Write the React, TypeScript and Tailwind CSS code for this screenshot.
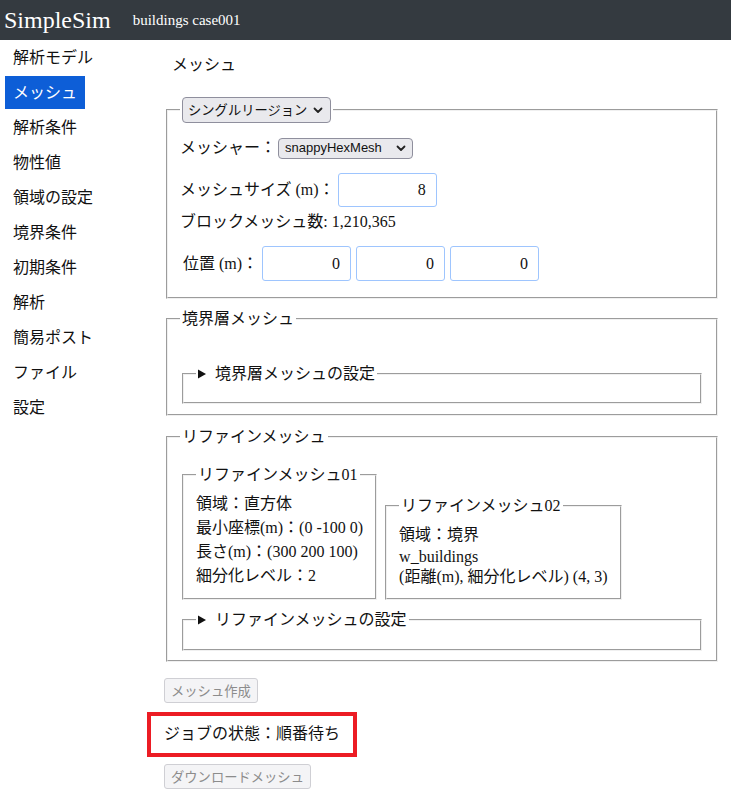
import React from 'react';

const menuItems = [
  '解析モデル',
  'メッシュ',
  '解析条件',
  '物性値',
  '領域の設定',
  '境界条件',
  '初期条件',
  '解析',
  '簡易ポスト',
  'ファイル',
  '設定',
];

function Chevron() {
  return (
    <svg width="10" height="7" viewBox="0 0 10 7" className="shrink-0">
      <polyline points="1.5,1.5 5,5 8.5,1.5" fill="none" stroke="#222" strokeWidth="1.8" strokeLinecap="round" strokeLinejoin="round" />
    </svg>
  );
}

function Triangle() {
  return (
    <svg width="9" height="10" viewBox="0 0 9 10" className="mr-[8px] inline-block">
      <polygon points="0,0.5 8,5 0,9.5" fill="#111" />
    </svg>
  );
}

function Sidebar() {
  return (
    <nav className="w-[164px] shrink-0 pt-px pl-[5px]">
      {menuItems.map((item) => {
        const active = item === 'メッシュ';
        return (
          <div key={item} className="h-[35px]">
            <span
              className={`inline-flex h-[33px] items-center px-2 text-[16px] ${
                active ? 'bg-[#0d5ed7] text-white' : 'text-[#111]'
              }`}
            >
              {item}
            </span>
          </div>
        );
      })}
    </nav>
  );
}

const fieldset = 'mx-[2px] border-2 border-[#f0f0f0] [border-style:groove] px-3';

function NumberBox({ value, width }: { value: string; width: string }) {
  return (
    <input
      readOnly
      value={value}
      className={`${width} h-full rounded-[3px] border border-[#9ec5fe] bg-white pr-[10px] text-right text-[16px] text-[#111] outline-none`}
    />
  );
}

export default function App() {
  return (
    <div className="min-h-screen bg-white font-['Liberation_Serif','Noto_Sans_CJK_JP',serif] text-[#111]">
      <header className="flex h-10 items-center bg-[#343a40] text-white">
        <span className="pl-[4px] text-[24px] leading-none">SimpleSim</span>
        <span className="ml-[22px] mt-[1px] text-[15px] leading-none">buildings case001</span>
      </header>

      <div className="flex">
        <Sidebar />

        <main className="w-[556px] pt-[13px]">
          <h2 className="pl-[8px] text-[16px] font-normal leading-6">メッシュ</h2>

          {/* single region */}
          <fieldset className={`${fieldset} mt-[20px] pb-[16px]`}>
            <legend className="px-[2px]">
              <span className="flex h-[26px] w-[149px] items-center justify-between rounded-[4px] border border-[#8f8f9d] bg-[#e9e9ed] pl-[5px] pr-[7px] font-['Noto_Sans_CJK_JP',sans-serif] text-[13.3px]">
                シングルリージョン
                <Chevron />
              </span>
            </legend>

            <div className="mt-[13px] flex h-6 items-center text-[16px]">
              <span>メッシャー：</span>
              <span className="ml-[2px] flex h-[21px] w-[135px] items-center justify-between rounded-[4px] border border-[#8f8f9d] bg-[#e9e9ed] pl-[6px] pr-[6px] font-['Liberation_Sans','Noto_Sans_CJK_JP',sans-serif] text-[13px]">
                snappyHexMesh
                <Chevron />
              </span>
            </div>

            <div className="mt-[13px] flex h-[34px] items-center text-[16px]">
              <span>メッシュサイズ (m)：</span>
              <span className="ml-[3px] h-[34px]">
                <NumberBox value="8" width="w-[99px]" />
              </span>
            </div>

            <div className="mt-[3px] text-[16px] leading-6">ブロックメッシュ数: 1,210,365</div>

            <div className="mt-[12px] flex h-[35px] items-center text-[16px]">
              <span className="pl-[3px]">位置 (m)：</span>
              <div className="ml-[4px] flex h-[35px] gap-[5px]">
                <NumberBox value="0" width="w-[89px]" />
                <NumberBox value="0" width="w-[89px]" />
                <NumberBox value="0" width="w-[89px]" />
              </div>
            </div>
          </fieldset>

          {/* boundary layer */}
          <fieldset className={`${fieldset} mt-[9px] pb-[10px]`}>
            <legend className="px-[2px] text-[16px] leading-[22px]">境界層メッシュ</legend>
            <fieldset className={`${fieldset} mt-[33px] pb-[17px]`}>
              <legend className="flex items-center px-[2px] text-[16px] leading-[22px]">
                <Triangle />
                境界層メッシュの設定
              </legend>
            </fieldset>
          </fieldset>

          {/* refine */}
          <fieldset className={`${fieldset} mt-[10px] pb-[9px]`}>
            <legend className="px-[2px] text-[16px] leading-[22px]">リファインメッシュ</legend>

            <div className="mt-[16px] flex items-end gap-[4px]">
              <fieldset className={`${fieldset} pb-[10px]`}>
                <legend className="px-[2px] text-[16px] leading-[22px]">リファインメッシュ01</legend>
                <div className="mt-[6px] text-[16px] leading-6">
                  <div>領域：直方体</div>
                  <div>最小座標(m)：(0 -100 0)</div>
                  <div>長さ(m)：(300 200 100)</div>
                  <div>細分化レベル：2</div>
                </div>
              </fieldset>

              <fieldset className={`${fieldset} pb-[11px]`}>
                <legend className="px-[2px] text-[16px] leading-[22px]">リファインメッシュ02</legend>
                <div className="mt-[6px] text-[16px]">
                  <div className="leading-6">領域：境界</div>
                  <div className="leading-[20px]">w_buildings</div>
                  <div className="leading-[20px]">(距離(m), 細分化レベル) (4, 3)</div>
                </div>
              </fieldset>
            </div>

            <fieldset className={`${fieldset} mt-[9px] pb-[18px]`}>
              <legend className="flex items-center px-[2px] text-[16px] leading-[22px]">
                <Triangle />
                リファインメッシュの設定
              </legend>
            </fieldset>
          </fieldset>

          <button
            disabled
            className="mt-[16px] h-[25px] rounded-[3px] border border-[#cfcfd4] bg-[#f4f4f6] px-[6px] font-['Noto_Sans_CJK_JP',sans-serif] text-[13.3px] text-[#8c8c8c]"
          >
            メッシュ作成
          </button>

          <div className="relative mt-[19px] text-[16px] leading-6">
            ジョブの状態：順番待ち
            <div className="pointer-events-none absolute -left-[17px] -top-[10px] h-[45px] w-[210px] border-4 border-[#ec1c24]" />
          </div>

          <button
            disabled
            className="mt-[18px] block h-[25px] rounded-[3px] border border-[#cfcfd4] bg-[#f4f4f6] px-[6px] font-['Noto_Sans_CJK_JP',sans-serif] text-[13.3px] text-[#8c8c8c]"
          >
            ダウンロードメッシュ
          </button>
        </main>
      </div>
    </div>
  );
}
